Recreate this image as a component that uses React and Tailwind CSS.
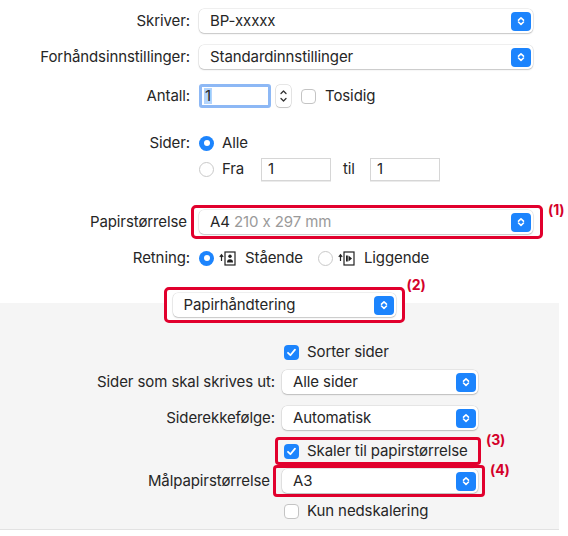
import React from 'react';

const RED = 'border-[#e1002d]';

function Stepper() {
  return (
    <svg width="12" height="10" viewBox="0 0 12 10" fill="none">
      <path d="M3.5 4.2 L6 1.8 L8.5 4.2" stroke="white" strokeWidth="1.6" strokeLinecap="round" strokeLinejoin="round" />
      <path d="M3.5 6 L6 8.4 L8.5 6" stroke="white" strokeWidth="1.6" strokeLinecap="round" strokeLinejoin="round" />
    </svg>
  );
}

function Select({ children, className = '' }) {
  return (
    <div className={`flex items-center justify-between h-[24px] bg-white rounded-[5px] shadow-[0_0_0_0.5px_rgba(0,0,0,0.12),0_1px_1.5px_rgba(0,0,0,0.18)] pl-[11px] pr-[2px] ${className}`}>
      <span className="text-[#262626] leading-[20px] whitespace-nowrap">{children}</span>
      <span className="w-[20px] h-[19px] rounded-[4px] bg-[#1c84fd] flex items-center justify-center shrink-0">
        <Stepper />
      </span>
    </div>
  );
}

function Radio({ on }) {
  return on ? (
    <span className="w-[15px] h-[15px] rounded-full bg-[#1c84fd] flex items-center justify-center shrink-0">
      <span className="block w-[6px] h-[6px] rounded-full bg-white" />
    </span>
  ) : (
    <span className="block w-[15px] h-[15px] rounded-full bg-white border border-[#c9c9c9] shrink-0" />
  );
}

function Check({ on }) {
  return on ? (
    <span className="w-[15px] h-[15px] rounded-[4px] bg-[#1c84fd] flex items-center justify-center shrink-0">
      <svg width="11" height="11" viewBox="0 0 11 11" fill="none">
        <path d="M2 5.8 L4.4 8.2 L9 2.6" stroke="white" strokeWidth="1.8" strokeLinecap="round" strokeLinejoin="round" />
      </svg>
    </span>
  ) : (
    <span className="block w-[15px] h-[15px] rounded-[4px] bg-white border border-[#c4c4c4] shrink-0" />
  );
}

function TextField({ value, className = '' }) {
  return (
    <div className={`h-[23px] bg-white border border-[#d6d6d6] shadow-[0_0.5px_0.5px_rgba(0,0,0,0.08)] flex items-center pl-[6px] text-[#262626] ${className}`}>
      {value}
    </div>
  );
}

function Portrait() {
  return (
    <svg width="17" height="15" viewBox="0 0 17 15" fill="none">
      <path d="M2.5 10 V4 M0.8 5.8 L2.5 3.8 L4.2 5.8" stroke="#222" strokeWidth="1.2" />
      <rect x="6" y="1" width="10" height="13" stroke="#222" strokeWidth="1.2" />
      <circle cx="11" cy="5.2" r="1.7" fill="#222" />
      <path d="M8 11.5 Q8 8.3 11 8.3 Q14 8.3 14 11.5 Z" fill="#222" />
    </svg>
  );
}

function Landscape() {
  return (
    <svg width="17" height="15" viewBox="0 0 17 15" fill="none">
      <path d="M2.5 10 V4 M0.8 5.8 L2.5 3.8 L4.2 5.8" stroke="#222" strokeWidth="1.2" />
      <rect x="6" y="1" width="10" height="13" stroke="#222" strokeWidth="1.2" />
      <rect x="8" y="4.5" width="1.8" height="6" fill="#222" />
      <path d="M10.5 4.5 L14 7.5 L10.5 10.5 Z" fill="#222" />
    </svg>
  );
}

function Mark({ children, className = '' }) {
  return <span className={`text-[14px] font-bold text-[#d4002a] leading-[14px] ${className}`}>{children}</span>;
}

function Label({ children, w }) {
  return <div className={`${w} text-right shrink-0 whitespace-nowrap text-[#262626]`}>{children}</div>;
}

export default function App() {
  return (
    <div className="w-[568px] h-[536px] bg-white overflow-hidden text-[#262626] text-[15px] tracking-[-0.1px]" style={{ fontFamily: 'Inter, "Liberation Sans", Arial, sans-serif' }}>
      <div className="pt-[9px]">
        <div className="flex items-center h-[24px]">
          <Label w="w-[190px]">Skriver:</Label>
          <Select className="ml-[9px] w-[334px]">BP-xxxxx</Select>
        </div>

        <div className="flex items-center h-[24px] mt-[12px]">
          <Label w="w-[190px]">Forhåndsinnstillinger:</Label>
          <Select className="ml-[9px] w-[334px]">Standardinnstillinger</Select>
        </div>

        <div className="flex items-center h-[24px] mt-[15px]">
          <Label w="w-[190px]">Antall:</Label>
          <div className="ml-[9px] w-[72px] h-[24px] rounded-[3px] border-[3px] border-[#8db8f5] bg-white flex items-center pl-[2px]">
            <span className="bg-[#b3d4fc] leading-[16px] px-[1px]">1</span>
          </div>
          <div className="ml-[5px] w-[15px] h-[22px] rounded-[4px] bg-white shadow-[0_0_0_0.5px_rgba(0,0,0,0.2),0_1px_1px_rgba(0,0,0,0.15)] flex items-center justify-center">
            <svg width="9" height="16" viewBox="0 0 9 16" fill="none">
              <path d="M2 5.5 L4.5 3 L7 5.5" stroke="#333" strokeWidth="1.3" strokeLinecap="round" strokeLinejoin="round" />
              <path d="M2 10.5 L4.5 13 L7 10.5" stroke="#333" strokeWidth="1.3" strokeLinecap="round" strokeLinejoin="round" />
            </svg>
          </div>
          <span className="ml-[10px]"><Check /></span>
          <span className="ml-[9px]">Tosidig</span>
        </div>

        <div className="flex items-center h-[20px] mt-[25px]">
          <Label w="w-[190px]">Sider:</Label>
          <span className="ml-[9px]"><Radio on /></span>
          <span className="ml-[8px]">Alle</span>
        </div>

        <div className="flex items-center h-[23px] mt-[5px]">
          <div className="w-[199px] shrink-0" />
          <Radio />
          <span className="ml-[8px] w-[39px]">Fra</span>
          <TextField value="1" className="w-[70px]" />
          <span className="ml-[12px] w-[27px]">til</span>
          <TextField value="1" className="w-[70px]" />
        </div>

        <div className="flex items-center h-[34px] mt-[24px]">
          <Label w="w-[187px]">Papirstørrelse</Label>
          <div className={`ml-[4px] w-[352px] h-[34px] border-[3px] ${RED} rounded-[5px] flex items-center pl-[5px]`}>
            <div className="flex items-center justify-between h-[24px] w-[334px] bg-white rounded-[5px] shadow-[0_0_0_0.5px_rgba(0,0,0,0.12),0_1px_1.5px_rgba(0,0,0,0.18)] pl-[11px] pr-[2px]">
              <span className="leading-[20px] whitespace-nowrap">
                <span className="text-[#262626]">A4</span>{' '}
                <span className="text-[#9a9a9a]">210 x 297 mm</span>
              </span>
              <span className="w-[20px] h-[19px] rounded-[4px] bg-[#1c84fd] flex items-center justify-center">
                <Stepper />
              </span>
            </div>
          </div>
          <Mark className="ml-[5px] self-start -mt-[2px]">(1)</Mark>
        </div>

        <div className="flex items-center h-[20px] mt-[9px]">
          <Label w="w-[190px]">Retning:</Label>
          <span className="ml-[9px]"><Radio on /></span>
          <span className="ml-[5px] flex"><Portrait /></span>
          <span className="ml-[9px]">Stående</span>
          <span className="ml-[15px]"><Radio /></span>
          <span className="ml-[5px] flex"><Landscape /></span>
          <span className="ml-[9px]">Liggende</span>
        </div>
      </div>

      <div className="relative z-10 flex justify-center mt-[19px] -mb-[20px]">
        <div className="relative">
          <div className={`w-[241px] h-[36px] border-[3px] ${RED} rounded-[5px] bg-white flex items-center pl-[6px]`}>
            <Select className="w-[223px]">Papirhåndtering</Select>
          </div>
          <Mark className="absolute left-[243px] -top-[9px]">(2)</Mark>
        </div>
      </div>

      <div className="w-[559px] h-[227px] bg-[#f5f5f5] border-b border-[#e2e2e2] pt-[39px]">
        <div className="flex items-center h-[20px]">
          <div className="w-[284px] shrink-0" />
          <Check on />
          <span className="ml-[8px]">Sorter sider</span>
        </div>

        <div className="flex items-center h-[24px] mt-[8px]">
          <Label w="w-[275px]">Sider som skal skrives ut:</Label>
          <Select className="ml-[7px] w-[196px]">Alle sider</Select>
        </div>

        <div className="flex items-center h-[24px] mt-[12px]">
          <Label w="w-[275px]">Siderekkefølge:</Label>
          <Select className="ml-[7px] w-[196px]">Automatisk</Select>
        </div>

        <div className="flex items-center h-[28px] mt-[7px]">
          <div className="w-[275px] shrink-0" />
          <div className={`w-[206px] h-[28px] border-[3px] ${RED} rounded-[4px] flex items-center pl-[6px]`}>
            <Check on />
            <span className="ml-[8px] whitespace-nowrap">Skaler til papirstørrelse</span>
          </div>
          <Mark className="ml-[5px] self-start -mt-[4px]">(3)</Mark>
        </div>

        <div className="flex items-center h-[32px]">
          <Label w="w-[270px]">Målpapirstørrelse</Label>
          <div className={`ml-[3px] w-[212px] h-[32px] border-[3px] ${RED} rounded-[4px] flex items-center pl-[6px]`}>
            <Select className="w-[196px]">A3</Select>
          </div>
          <Mark className="ml-[5px] self-start -mt-[2px]">(4)</Mark>
        </div>

        <div className="flex items-center h-[20px] mt-[4px]">
          <div className="w-[284px] shrink-0" />
          <Check />
          <span className="ml-[8px]">Kun nedskalering</span>
        </div>
      </div>
    </div>
  );
}
